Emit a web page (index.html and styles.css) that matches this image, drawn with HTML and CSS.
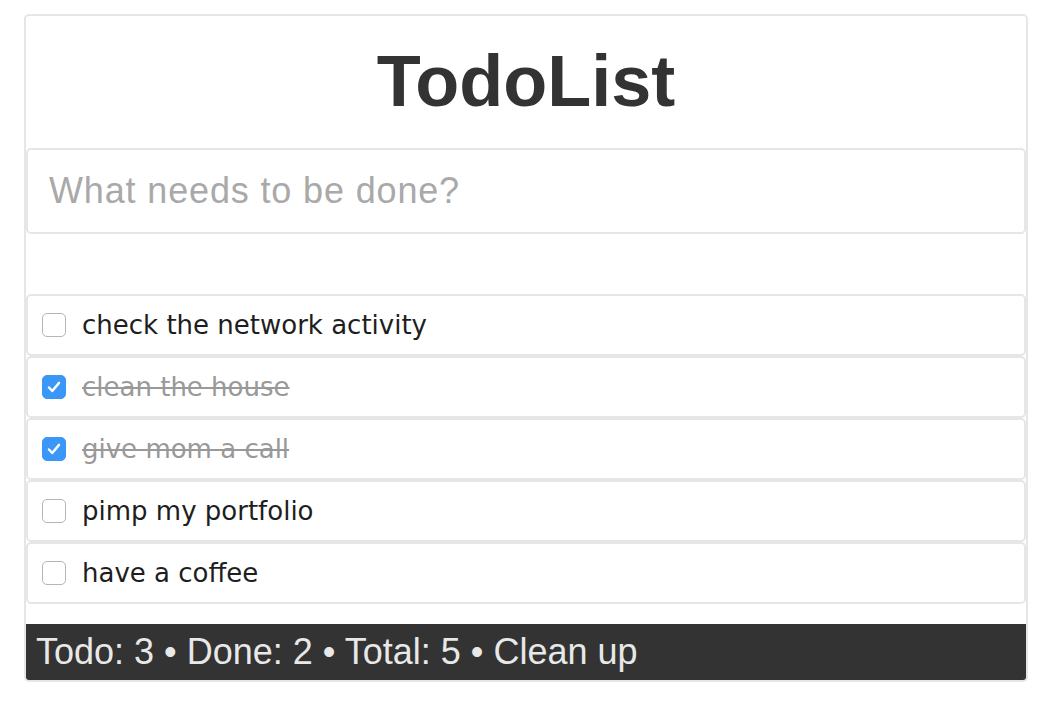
FILE: index.html
```html
<!DOCTYPE html>
<html>
<head>
<meta charset="utf-8">
<link rel="stylesheet" href="styles.css">
</head>
<body>
<div class="app">
  <h1 class="title">TodoList</h1>
  <input class="new-todo" type="text" placeholder="What needs to be done?">
  <ul class="list">
    <li class="item"><span class="box"></span><span class="label">check the network activity</span></li>
    <li class="item done"><span class="box checked"><svg viewBox="0 0 24 24" width="24" height="24"><path d="M6.5 12.5l3.6 3.9L17.5 7.5" fill="none" stroke="#fff" stroke-width="2.6" stroke-linecap="round" stroke-linejoin="round"/></svg></span><span class="label">clean the house</span></li>
    <li class="item done"><span class="box checked"><svg viewBox="0 0 24 24" width="24" height="24"><path d="M6.5 12.5l3.6 3.9L17.5 7.5" fill="none" stroke="#fff" stroke-width="2.6" stroke-linecap="round" stroke-linejoin="round"/></svg></span><span class="label">give mom a call</span></li>
    <li class="item"><span class="box"></span><span class="label">pimp my portfolio</span></li>
    <li class="item"><span class="box"></span><span class="label">have a coffee</span></li>
  </ul>
  <div class="footer">Todo: 3 • Done: 2 • Total: 5 • Clean up</div>
</div>
</body>
</html>
```

FILE: styles.css
```css
* { box-sizing: border-box; }
html, body { margin: 0; padding: 0; background: #fff; }
body { font-family: "Liberation Sans", Arial, sans-serif; color: #333; }
.app {
  width: 1004px;
  margin: 14px 0 0 24px;
  border: 2px solid #e6e6e6;
  border-radius: 5px;
  overflow: hidden;
  display: flex;
  flex-direction: column;
}
.title {
  margin: 0;
  height: 132px;
  display: flex;
  align-items: center;
  justify-content: center;
  font-size: 72px;
  font-weight: bold;
  color: #333;
  padding-bottom: 2px;
}
.new-todo {
  display: block;
  width: 100%;
  height: 86px;
  border: 2px solid #e6e6e6;
  border-radius: 5px;
  padding: 0 21px;
  font-family: "Liberation Sans", Arial, sans-serif;
  font-size: 36px;
  letter-spacing: 0.85px;
  color: #333;
  outline: none;
  margin: 0;
}
.new-todo::placeholder { color: #a9a9a9; }
.list {
  list-style: none;
  margin: 60px 0 0 0;
  padding: 0;
}
.item {
  height: 62px;
  border: 2px solid #e6e6e6;
  border-radius: 5px;
  display: flex;
  align-items: center;
  padding: 0 0 0 14px;
  font-family: "DejaVu Sans", Verdana, sans-serif;
  font-size: 26px;
  color: #1e1e1e;
}
.box {
  width: 24px;
  height: 24px;
  border: 1.5px solid #b5b5b5;
  border-radius: 5px;
  background: #fff;
  margin-right: 16px;
  flex: none;
  display: flex;
  align-items: center;
  justify-content: center;
}
.box.checked {
  background: #3a96f7;
  border-color: #3a96f7;
}
.box svg { display: block; }
.done .label { color: #999; text-decoration: line-through; }
.footer {
  margin-top: 20px;
  height: 56px;
  background: #333;
  color: #e8e8e8;
  font-size: 36px;
  display: flex;
  align-items: center;
  padding: 0 10px;
}
```
